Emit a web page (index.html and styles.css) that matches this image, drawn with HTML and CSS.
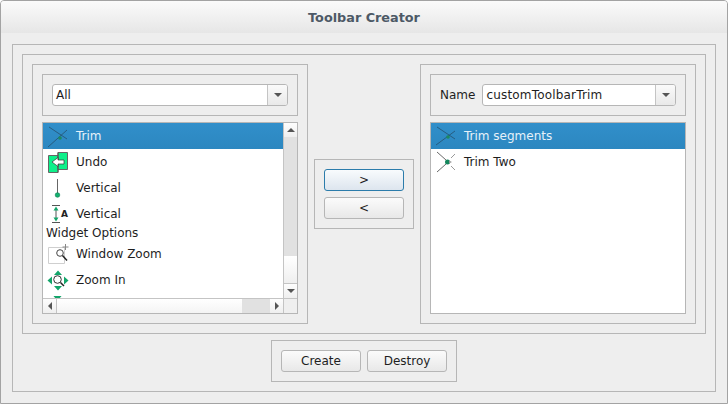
FILE: index.html
```html
<!DOCTYPE html>
<html lang="en">
<head>
    <meta charset="UTF-8">
    <title>Toolbar Creator</title>
    <link rel="stylesheet" href="styles.css">
</head>
<body>
    <div class="window">
        <div class="titlebar">Toolbar Creator</div>
        <div class="frame outer">
            <div class="frame main">

                <div class="frame side">
                    <div class="frame picker">
                        <div class="combo">
                            <span class="combo-text">All</span>
                            <span class="combo-button"><i class="arrow down"></i></span>
                        </div>
                    </div>
                    <div class="list scrolled">
                        <div class="viewport">
                            <div class="item selected">
                                <svg class="icon" viewBox="0 0 26 26"><path d="M3 4L21 16M2 24L21 7" stroke="#24506f" stroke-width=".8" fill="none"/><circle cx="14" cy="15" r="1.800" fill="#1c8a62"/></svg>
                                Trim
                            </div>
                            <div class="item">
                                <svg class="icon" viewBox="0 0 26 26"><path d="M2.500 6.500H12V23.500H2.500Z" fill="#0ef08a" stroke="#666"/><path d="M12 3.500H21.500V20.500H12Z" fill="#0ef08a" stroke="#666"/><path d="M12 3.500V23.500" stroke="#555"/><path d="M6 13L12 8.500V11H18V15H12V17.500Z" fill="#fff" stroke="#333" stroke-width=".7"/></svg>
                                Undo
                            </div>
                            <div class="item">
                                <svg class="icon" viewBox="0 0 26 26"><path d="M11.500 4V18" stroke="#666" fill="none"/><circle cx="11.500" cy="20" r="2.300" fill="#13b06f" stroke="#0b7d50" stroke-width=".6"/></svg>
                                Vertical
                            </div>
                            <div class="item">
                                <svg class="icon" viewBox="0 0 26 26"><path d="M6 4.500H14M6 21.500H14M10 7V19" stroke="#555" fill="none"/><path d="M10 5.500L7.500 9.500H12.500ZM10 20.500L7.500 16.500H12.500Z" fill="#13a56a"/><text x="15" y="16" class="icon-letter">A</text></svg>
                                Vertical
                            </div>
                            <div class="subhead">Widget Options</div>
                            <div class="item">
                                <svg class="icon" viewBox="0 0 26 26"><path d="M2.500 6.500H18.500V22.500H2.500Z" fill="#fff" stroke="#cfcfcf"/><circle cx="14" cy="12" r="3.300" fill="#fff" stroke="#444"/><path d="M16.500 14.500L21 19.500" stroke="#222" stroke-width="1.500"/><path d="M19.500 3V9M16.500 6H22.500" stroke="#888"/></svg>
                                Window Zoom
                            </div>
                            <div class="item">
                                <svg class="icon" viewBox="0 0 26 26"><path d="M12 3.500L16 8H8ZM12 23.500L8 19H16ZM1.500 13.500L6 9.500V17.500ZM22.500 13.500L18 9.500V17.500Z" fill="#13a56a"/><circle cx="11.500" cy="12.500" r="3.800" fill="#fff" stroke="#333"/><path d="M14.500 15.500L18 19" stroke="#222" stroke-width="1.500"/></svg>
                                Zoom In
                            </div>
                            <div class="item">
                                <svg class="icon" viewBox="0 0 26 26"><path d="M7.500 3H15.500L11.500 8Z" fill="#13a56a"/></svg>
                            </div>
                        </div>
                        <div class="vbar">
                            <span class="bar-button"><i class="arrow up"></i></span>
                            <span class="vbar-track"></span>
                            <span class="vbar-rest"></span>
                            <span class="bar-button"><i class="arrow down"></i></span>
                        </div>
                        <div class="hbar">
                            <span class="bar-button"><i class="arrow left"></i></span>
                            <span class="hbar-rest"></span>
                            <span class="hbar-track"></span>
                            <span class="bar-button"><i class="arrow right"></i></span>
                        </div>
                        <div class="corner"></div>
                    </div>
                </div>

                <div class="frame middle">
                    <button class="btn focused">&gt;</button>
                    <button class="btn">&lt;</button>
                </div>

                <div class="frame side">
                    <div class="frame picker">
                        <span class="name-label">Name</span>
                        <div class="combo">
                            <span class="combo-text wide">customToolbarTrim</span>
                            <span class="combo-button"><i class="arrow down"></i></span>
                        </div>
                    </div>
                    <div class="list">
                        <div class="viewport">
                            <div class="item selected">
                                <svg class="icon" viewBox="0 0 26 26"><path d="M3 4L21 16M2 22L21 8" stroke="#24506f" stroke-width=".8" fill="none"/><circle cx="14" cy="14" r="1.800" fill="#1c8a62"/></svg>
                                Trim segments
                            </div>
                            <div class="item">
                                <svg class="icon" viewBox="0 0 26 26"><path d="M3 3L12 11M3 23L12 15" stroke="#444" stroke-width=".8" fill="none"/><path d="M17 9L21 5M17 17L21 21" stroke="#999" fill="none"/><circle cx="13.500" cy="13" r="2.500" fill="#13875c"/><path d="M15 11.500L18 13L15 14.500Z" fill="#999"/></svg>
                                Trim Two
                            </div>
                        </div>
                    </div>
                </div>

            </div>
            <div class="frame actions">
                <button class="btn">Create</button>
                <button class="btn">Destroy</button>
            </div>
        </div>
    </div>
</body>
</html>
```

FILE: styles.css
```css
html, body {
    margin: 0;
    padding: 0;
}

body {
    font-family: "DejaVu Sans", sans-serif;
    font-size: 12px;
    color: #1e1e1e;
}

.window {
    width: 728px;
    height: 404px;
    box-sizing: border-box;
    border: 1px solid #a3a3a3;
    border-radius: 4px 4px 0 0;
    background-color: #eeeeee;
    display: flex;
    flex-direction: column;
    overflow: hidden;
}

.titlebar {
    height: 32px;
    flex: none;
    display: flex;
    align-items: center;
    justify-content: center;
    background: linear-gradient(#fbfbfb, #e6e6e6);
    font-size: 12.8px;
    font-weight: bold;
    color: #4d5966;
}

.frame {
    border: 1px solid #b6b6b6;
    box-sizing: border-box;
    padding: 9px;
}

.outer {
    flex: 1;
    min-height: 0;
    margin: 11px;
    display: flex;
    flex-direction: column;
    gap: 6px;
}

.main {
    flex: 1;
    min-height: 0;
    display: flex;
    align-items: stretch;
    gap: 6px;
}

.side {
    flex: 1;
    min-height: 0;
    display: flex;
    flex-direction: column;
    gap: 6px;
}

.picker {
    height: 42px;
    flex: none;
    display: flex;
    align-items: center;
    gap: 7px;
}

.name-label {
    flex: none;
}

.middle {
    flex: none;
    width: 100px;
    height: 70px;
    align-self: center;
    display: flex;
    flex-direction: column;
    gap: 6px;
}

.actions {
    flex: none;
    height: 42px;
    width: 186px;
    align-self: center;
    display: flex;
    gap: 6px;
}

.combo {
    flex: 1;
    height: 22px;
    box-sizing: border-box;
    border: 1px solid #b6b6b6;
    border-radius: 3px;
    background-color: white;
    display: flex;
    overflow: hidden;
}

.combo-text {
    flex: 1;
    line-height: 20px;
    padding-left: 3px;
}

.combo-text.wide {
    letter-spacing: 0.18px;
}

.combo-button {
    width: 19px;
    flex: none;
    border-left: 1px solid #c4c4c4;
    background: linear-gradient(#fafafa, #e9e9e9);
    display: flex;
    align-items: center;
    justify-content: center;
}

.arrow {
    display: block;
    width: 0;
    height: 0;
    border-style: solid;
    border-color: transparent;
}

.arrow.down {
    border-width: 4px 4px 0 4px;
    border-top-color: #555;
}

.arrow.up {
    border-width: 0 4px 4px 4px;
    border-bottom-color: #555;
}

.arrow.left {
    border-width: 4px 4px 4px 0;
    border-right-color: #555;
}

.arrow.right {
    border-width: 4px 0 4px 4px;
    border-left-color: #555;
}

.btn {
    flex: none;
    width: 80px;
    height: 22px;
    box-sizing: border-box;
    padding: 0;
    font-family: inherit;
    font-size: 12px;
    color: #1e1e1e;
    border: 1px solid #b6b6b6;
    border-radius: 3px;
    background: linear-gradient(#fbfbfb, #e8e8e8);
}

.btn.focused {
    border-color: #2c7cab;
    background: linear-gradient(#f8fbfd, #dde5ee);
}

.list {
    flex: 1;
    min-height: 0;
    box-sizing: border-box;
    border: 1px solid #b6b6b6;
    background-color: white;
    display: grid;
    grid-template-columns: minmax(0, 1fr);
    grid-template-rows: minmax(0, 1fr);
    overflow: hidden;
}

.list.scrolled {
    grid-template-columns: minmax(0, 1fr) 14px;
    grid-template-rows: minmax(0, 1fr) 15px;
}

.viewport {
    overflow: hidden;
    min-height: 0;
    min-width: 0;
}

.item {
    height: 26px;
    display: flex;
    align-items: center;
    gap: 4px;
    padding-left: 3px;
    padding-bottom: 1px;
    box-sizing: border-box;
}

.item.selected {
    background: linear-gradient(#318fca, #2c87c0);
    color: #e6f1f9;
}

.subhead {
    height: 14px;
    line-height: 13px;
    padding-left: 3px;
}

.icon {
    width: 26px;
    height: 26px;
    flex: none;
    margin-top: 1px;
}

.icon-letter {
    font-family: "DejaVu Sans", sans-serif;
    font-size: 9px;
    font-weight: bold;
    fill: #222;
}

.vbar {
    border-left: 1px solid #c4c4c4;
    box-sizing: border-box;
    display: flex;
    flex-direction: column;
    min-height: 0;
}

.hbar {
    border-top: 1px solid #c4c4c4;
    box-sizing: border-box;
    display: flex;
}

.corner {
    border-top: 1px solid #c4c4c4;
    border-left: 1px solid #c4c4c4;
    background-color: #efefef;
}

.bar-button {
    flex: none;
    display: flex;
    align-items: center;
    justify-content: center;
    background: linear-gradient(#fdfdfd, #efefef);
}

.vbar .bar-button {
    height: 14px;
}

.vbar .bar-button:last-child {
    border-top: 1px solid #c4c4c4;
}

.hbar .bar-button {
    width: 13px;
}

.hbar .bar-button:first-child {
    border-right: 1px solid #c4c4c4;
}

.vbar-track {
    flex: 1;
    background-color: #e1e1e1;
}

.vbar-rest {
    height: 27px;
    flex: none;
    background: linear-gradient(#fff, #efefef);
}

.hbar-rest {
    flex: 1;
    background: linear-gradient(#fff, #f4f4f4);
}

.hbar-track {
    width: 28px;
    flex: none;
    background-color: #e1e1e1;
}
```
